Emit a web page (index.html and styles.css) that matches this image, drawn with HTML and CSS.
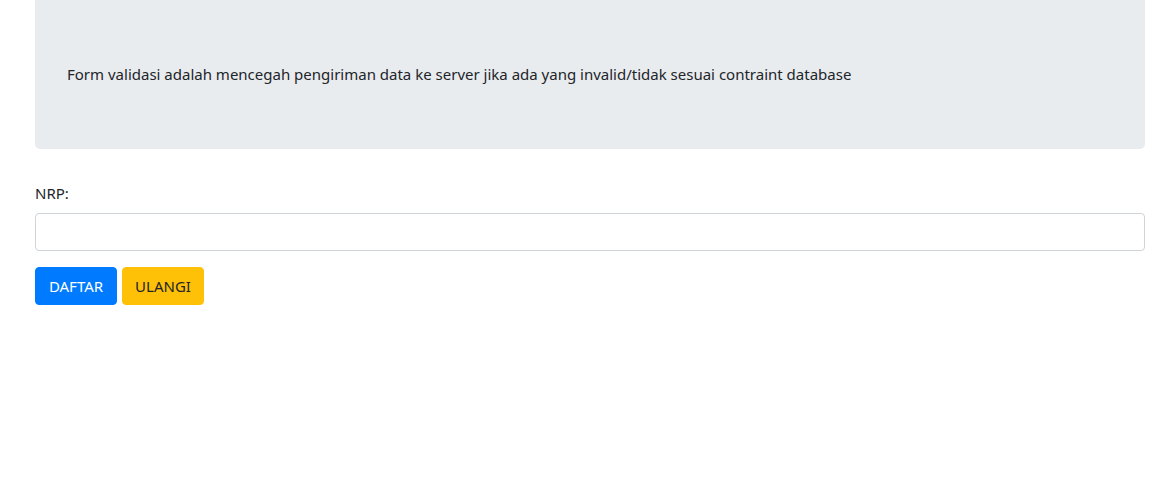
FILE: index.html
```html
<!DOCTYPE html>
<html>
<head>
<meta charset="utf-8">
<link rel="stylesheet" href="styles.css">
</head>
<body>
<div class="container">
  <div class="jumbotron">
    <p class="lead-text">Form validasi adalah mencegah pengiriman data ke server jika ada yang invalid/tidak sesuai contraint database</p>
  </div>
  <form class="form">
    <div class="form-group">
      <label class="label" for="nrp">NRP:</label>
      <input class="input" id="nrp" type="text">
    </div>
    <div class="actions">
      <button type="button" class="btn btn-primary">DAFTAR</button>
      <button type="button" class="btn btn-warning">ULANGI</button>
    </div>
  </form>
</div>
</body>
</html>
```
FILE: styles.css
```css
* { box-sizing: border-box; }
html, body { margin: 0; padding: 0; background: #fff; }
body {
  font-family: "Noto Sans", "Open Sans", sans-serif;
  font-size: 15px;
  line-height: 24px;
  color: #212529;
}
.container {
  width: 1110px;
  margin-left: 35px;
}
.jumbotron {
  background: #e9ecef;
  border-radius: 0 0 5px 5px;
  padding: 62px 32px 63px;
  margin-bottom: 32px;
}
.lead-text { margin: 0; }
.form-group { margin-bottom: 16px; }
.label { display: block; margin-bottom: 8px; }
.input {
  display: block;
  width: 100%;
  height: 38px;
  border: 1px solid #ced4da;
  border-radius: 4px;
  background: #fff;
  font: inherit;
  padding: 6px 12px;
}
.actions { display: flex; gap: 5px; }
.btn {
  width: 82px;
  height: 38px;
  border: 1px solid transparent;
  border-radius: 4px;
  font: inherit;
  padding: 6px 0;
  text-align: center;
  cursor: pointer;
}
.btn-primary { background: #007bff; border-color: #007bff; color: #fff; }
.btn-warning { background: #ffc107; border-color: #ffc107; color: #212529; }
```
